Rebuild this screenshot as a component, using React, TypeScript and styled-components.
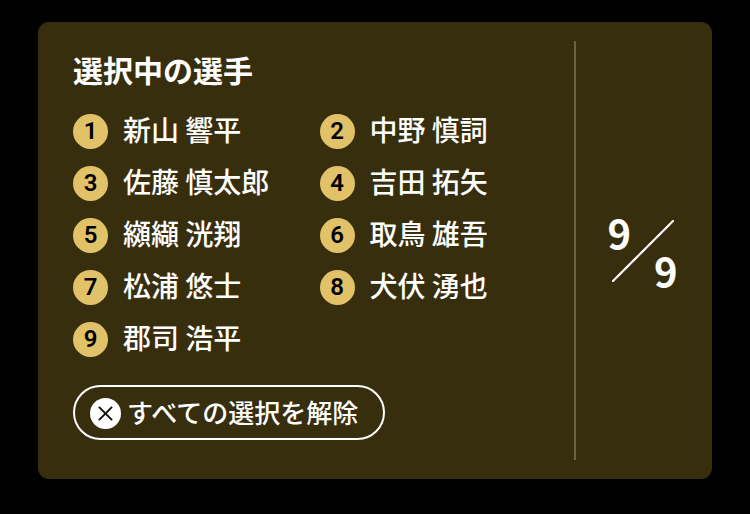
import React from "react";
import styled, { createGlobalStyle } from "styled-components";

const GlobalStyle = createGlobalStyle`
  *, *::before, *::after { box-sizing: border-box; }
  body {
    margin: 0;
    background: #000;
    color: #fff;
    font-family: "Noto Sans CJK JP", sans-serif;
  }
`;

const Page = styled.main`
  padding: 22px 38px 35px;
`;

const Panel = styled.section`
  display: flex;
  padding: 19px 0;
  border-radius: 11px;
  background: #372e0d;
`;

const Selection = styled.div`
  flex: 1;
  min-width: 0;
  padding: 8px 8px 20px 35px;
`;

const Title = styled.h2`
  margin: 0 0 25px;
  font-size: 30px;
  font-weight: 700;
  line-height: 40px;
`;

const PlayerList = styled.ol`
  display: grid;
  grid-template-columns: repeat(2, 1fr);
  row-gap: 17px;
  margin: 0 0 28px;
  padding: 0;
  list-style: none;
`;

const Player = styled.li`
  display: flex;
  align-items: flex-start;
  gap: 15px;
  height: 35px;
`;

const NumberBadge = styled.span`
  display: flex;
  flex: none;
  align-items: center;
  justify-content: center;
  width: 35px;
  height: 35px;
  border-radius: 50%;
  background: #e2c269;
  color: #000;
  font-family: Roboto, sans-serif;
  font-size: 24px;
  font-weight: 600;
  line-height: 35px;
`;

const PlayerName = styled.span`
  font-size: 28px;
  font-weight: 500;
  line-height: 30px;
  white-space: nowrap;
`;

const ClearButton = styled.button`
  display: inline-flex;
  align-items: center;
  gap: 6px;
  height: 55px;
  padding: 2px 25px 0 15px;
  border: 2px solid #fff;
  border-radius: 28px;
  background: transparent;
  color: inherit;
  font-family: inherit;
  font-size: 26px;
  font-weight: 500;
  line-height: 36px;
  white-space: nowrap;
  vertical-align: top;
  cursor: pointer;
`;

const ClearLabel = styled.span`
  padding-bottom: 3px;
`;

const Counter = styled.div`
  display: flex;
  flex: none;
  align-items: center;
  justify-content: center;
  width: 138px;
  padding-right: 3px;
  border-left: 2px solid #6b6249;
`;

const Fraction = styled.div`
  display: grid;
  width: 70px;
  height: 80px;

  > * {
    grid-area: 1 / 1;
  }
`;

const Count = styled.span<{ $place: "start" | "end" }>`
  place-self: ${(p) => p.$place};
  font-size: 40px;
  font-weight: 700;
  line-height: 42px;
`;

const Slash = styled.svg`
  place-self: center;
`;

const players = [
  "新山 響平",
  "中野 慎詞",
  "佐藤 慎太郎",
  "吉田 拓矢",
  "纐纈 洸翔",
  "取鳥 雄吾",
  "松浦 悠士",
  "犬伏 湧也",
  "郡司 浩平",
];

function ClearIcon() {
  return (
    <svg width="31" height="31" viewBox="0 0 31 31" aria-hidden="true">
      <circle cx="15.5" cy="15.5" r="15.5" fill="#fff" />
      <path d="M8.9 8.9 22.1 22.1M22.1 8.9 8.9 22.1" stroke="#14110a" strokeWidth="2" />
    </svg>
  );
}

export default function App() {
  return (
    <>
      <GlobalStyle />
      <Page>
        <Panel>
          <Selection>
            <Title>選択中の選手</Title>
            <PlayerList>
              {players.map((name, i) => (
                <Player key={name}>
                  <NumberBadge>{i + 1}</NumberBadge>
                  <PlayerName>{name}</PlayerName>
                </Player>
              ))}
            </PlayerList>
            <ClearButton type="button">
              <ClearIcon />
              <ClearLabel>すべての選択を解除</ClearLabel>
            </ClearButton>
          </Selection>
          <Counter>
            <Fraction>
              <Count $place="start">9</Count>
              <Slash width="62" height="62" viewBox="0 0 62 62" aria-hidden="true">
                <path d="M1 61 61 1" stroke="#fff" strokeWidth="2.2" strokeLinecap="round" />
              </Slash>
              <Count $place="end">9</Count>
            </Fraction>
          </Counter>
        </Panel>
      </Page>
    </>
  );
}
